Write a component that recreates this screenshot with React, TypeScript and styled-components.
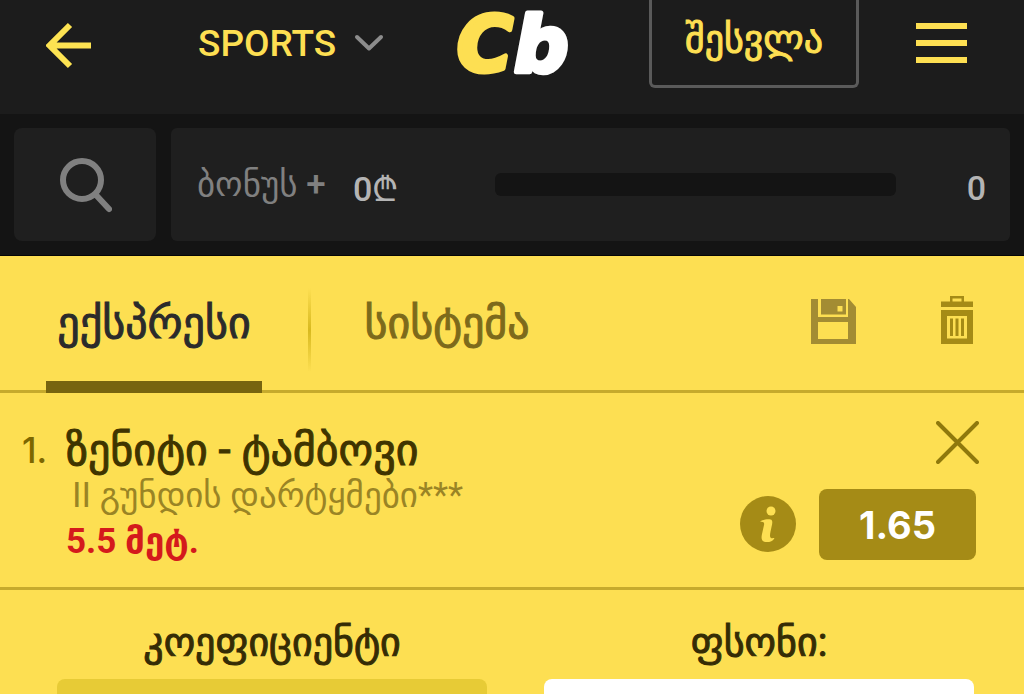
import React from "react";
import styled, { createGlobalStyle } from "styled-components";

const GlobalStyle = createGlobalStyle`
  *, *::before, *::after { box-sizing: border-box; }
  body { margin: 0; background: #fddf52; font-family: Roboto, "DejaVu Sans", sans-serif; }
  button, input { font: inherit; color: inherit; margin: 0; }
  button { background: none; border: 0; padding: 0; cursor: pointer; }
  svg { display: block; }
`;

const Page = styled.div`
  display: flex;
  flex-direction: column;
  height: 100vh;
  overflow: hidden;
  > * { flex-shrink: 0; }
`;

const Header = styled.header`
  display: flex;
  align-items: flex-start;
  justify-content: space-between;
  min-height: 114px;
  padding: 0 57px 0 46px;
  background: #1c1c1c;
  color: #fddf52;
`;

const HeaderGroup = styled.div<{ $gap: number }>`
  display: flex;
  align-items: flex-start;
  gap: ${(p) => p.$gap}px;
`;

const IconButton = styled.button`
  padding-top: 22px;
`;

const SportsMenu = styled.button`
  display: flex;
  align-items: center;
  gap: 18px;
  height: 86px;
  font-size: 37px;
  font-weight: 500;
`;

const Logo = styled.a`
  svg { overflow: visible; }
`;

const LoginButton = styled.button`
  width: 210px;
  height: 88px;
  padding-bottom: 8px;
  border: 3px solid #5a5a5a;
  border-top: 0;
  border-radius: 0 0 6px 6px;
  font-size: 38px;
  -webkit-text-stroke: 1px currentColor;
`;

const BonusBar = styled.section`
  display: flex;
  gap: 15px;
  padding: 14px;
  background: #141414;
  border-bottom: 1px solid #060606;
`;

const SearchButton = styled.button`
  display: flex;
  align-items: center;
  justify-content: center;
  width: 142px;
  height: 113px;
  border-radius: 8px;
  background: #1f1f1f;
`;

const BonusPanel = styled.div`
  display: flex;
  flex: 1;
  align-items: center;
  padding: 0 24px 0 26px;
  border-radius: 6px;
  background: #1f1f1f;
  color: #b4b4b4;
  font-size: 34px;
  font-weight: 500;
`;

const BonusLabel = styled.span`
  width: 156px;
  color: #808080;
  font-size: 35px;
  white-space: nowrap;
`;

const BonusAmount = styled.span`
  width: 142px;
  padding-top: 6px;
`;

const BonusPoints = styled.span`
  padding-top: 6px;
`;

const BonusTrack = styled.div`
  flex: 1;
  height: 23px;
  margin-right: 71px;
  border-radius: 6px;
  background: #141414;
`;

const TabBar = styled.nav`
  display: flex;
  align-items: center;
  height: 137px;
  padding: 0 51px 0 46px;
  border-bottom: 3px solid #c6aa2c;
`;

const Tab = styled.button<{ $active?: boolean }>`
  align-self: stretch;
  min-width: ${(p) => (p.$active ? 216 : 180)}px;
  margin-bottom: -3px;
  padding-top: 8px;
  border-bottom: 12px solid ${(p) => (p.$active ? "#77640f" : "transparent")};
  color: ${(p) => (p.$active ? "#2b2b2b" : "#7d6a1b")};
  font-size: 44px;
  -webkit-text-stroke: 1px currentColor;
`;

const TabDivider = styled.span`
  width: 3px;
  height: 84px;
  margin: 14px 46px 0;
  background: linear-gradient(#fddf52, #d8b91f, #fddf52);
`;

const TabActions = styled.div`
  display: flex;
  align-items: flex-end;
  gap: 85px;
  margin: 0 0 6px auto;
`;

const Selection = styled.article`
  display: flex;
  padding: 28px 48px 22px 22px;
  border-bottom: 3px solid #c6aa2c;
  line-height: 46px;
`;

const Ordinal = styled.span`
  width: 44px;
  padding-top: 6px;
  color: #7d6700;
  font-family: Inter, Roboto, sans-serif;
  font-size: 35px;
  font-weight: 500;
`;

const Details = styled.div`
  flex: 1;
  padding-top: 6px;
`;

const MatchTitle = styled.h2`
  margin: 0;
  color: #3f3400;
  font-size: 44px;
  font-weight: 400;
  -webkit-text-stroke: 1px currentColor;
`;

const Market = styled.p`
  margin: 0;
  padding-left: 6px;
  color: #9a8425;
  font-size: 35px;
`;

const Pick = styled.p`
  margin: 0;
  color: #d41a1c;
  font-size: 35px;
  font-weight: 700;
`;

const Side = styled.div`
  display: flex;
  flex-direction: column;
  align-items: flex-end;
  gap: 25px;
`;

const CloseButton = styled.button`
  margin-right: -3px;
`;

const OddsRow = styled.div`
  display: flex;
  align-items: center;
  gap: 22px;
`;

const Odds = styled.button`
  width: 157px;
  height: 71px;
  border-radius: 8px;
  background: #a58b16;
  color: #fff;
  font-family: Inter, Roboto, sans-serif;
  font-size: 38px;
  font-weight: 700;
`;

const Stake = styled.form`
  display: grid;
  grid-template-columns: 1fr 1fr;
  column-gap: 57px;
  padding: 30px 50px 0 57px;
`;

const Field = styled.label`
  display: flex;
  flex-direction: column;
  gap: 13px;
  color: #352c05;
  font-size: 40px;
  line-height: 46px;
  text-align: center;
  -webkit-text-stroke: 1px currentColor;
`;

const FieldInput = styled.input<{ $filled?: boolean }>`
  width: 100%;
  height: 76px;
  border: 0;
  border-radius: 8px;
  background: ${(p) => (p.$filled ? "#e7cb36" : "#fff")};
  text-align: center;
`;

export default function App() {
  return (
    <Page>
      <GlobalStyle />
      <Header>
        <HeaderGroup $gap={106}>
          <IconButton aria-label="Back">
            <svg width="46" height="47" viewBox="0 0 46 47" fill="none" stroke="#fde352" strokeWidth="6">
              <path d="M24 3 3.500 23.500 24 44M4 23.500H45" />
            </svg>
          </IconButton>
          <SportsMenu aria-haspopup="menu">
            SPORTS
            <svg width="30" height="18" viewBox="0 0 30 18" fill="none" stroke="#8c8c8c" strokeWidth="4" strokeLinecap="round" strokeLinejoin="round">
              <path d="M3 3 15 14.500 27 3" />
            </svg>
          </SportsMenu>
        </HeaderGroup>
        <Logo href="#" aria-label="Home">
          <svg width="118" height="96" viewBox="0 0 118 96" fontFamily="DejaVu Sans, sans-serif" fontWeight="700" fontStyle="italic" fontSize="76" strokeWidth="5" strokeLinejoin="round">
            <text x="-1" y="71" fill="#fddf52" stroke="#fddf52">C</text>
            <text x="56" y="71" fill="#fff" stroke="#fff">b</text>
          </svg>
        </Logo>
        <HeaderGroup $gap={57}>
          <LoginButton>შესვლა</LoginButton>
          <IconButton aria-label="Menu">
            <svg width="51" height="42" viewBox="0 0 51 42" fill="#fddf52">
              <path d="M0 1h51v6H0zM0 18h51v6H0zM0 35h51v6H0z" />
            </svg>
          </IconButton>
        </HeaderGroup>
      </Header>

      <BonusBar>
        <SearchButton aria-label="Search">
          <svg width="54" height="56" viewBox="0 0 54 56" fill="none" stroke="#808080" strokeLinecap="round">
            <circle cx="24" cy="23" r="19" strokeWidth="6" />
            <path d="M38 38 51 52" strokeWidth="6" />
          </svg>
        </SearchButton>
        <BonusPanel>
          <BonusLabel>ბონუს +</BonusLabel>
          <BonusAmount>0₾</BonusAmount>
          <BonusTrack />
          <BonusPoints>0</BonusPoints>
        </BonusPanel>
      </BonusBar>

      <TabBar>
        <Tab $active>ექსპრესი</Tab>
        <TabDivider />
        <Tab>სისტემა</Tab>
        <TabActions>
          <button aria-label="Save">
            <svg width="45" height="45" viewBox="0 0 45 45" fill="#a38c33">
              <path fillRule="evenodd" d="M0 0h7v40.500h30V0h1l7 8v37H0z" />
              <path d="M7 18h30v5H7zM7 40h30v5H7z" />
              <path fillRule="evenodd" d="M10 0h25v15.500H10zM26.500 7v5.500h5V7z" />
            </svg>
          </button>
          <button aria-label="Delete all">
            <svg width="32" height="48" viewBox="0 0 32 48" fill="#a58b16">
              <path fillRule="evenodd" d="M0 5.500h9V0h14v5.500h9V11H0zM11.500 2.500v3h9v-3zM0 14h32v34H0zM6 20v22.500h20V20z" />
              <path d="M9 22.500h3v17.500H9zM14.500 22.500h3v17.500h-3zM20 22.500h3v17.500h-3z" />
            </svg>
          </button>
        </TabActions>
      </TabBar>

      <Selection>
        <Ordinal>1.</Ordinal>
        <Details>
          <MatchTitle>ზენიტი - ტამბოვი</MatchTitle>
          <Market>II გუნდის დარტყმები***</Market>
          <Pick>5.5 მეტ.</Pick>
        </Details>
        <Side>
          <CloseButton aria-label="Remove">
            <svg width="43" height="43" viewBox="0 0 43 43" stroke="#8f790c" strokeWidth="4" strokeLinecap="round">
              <path d="M2 2 41 41M41 2 2 41" />
            </svg>
          </CloseButton>
          <OddsRow>
            <button aria-label="Info">
              <svg width="58" height="58" viewBox="0 0 58 58">
                <circle cx="29" cy="28" r="28" fill="#a58b16" />
                <circle cx="32" cy="15" r="4.500" fill="#fddf52" />
                <path d="M21 25.500C24 23.500 29 23 31.500 23.500C34 24 33.500 27 32.500 31C31.500 36 30 41 32 42C33 42.500 34.500 42 35.500 42C34 45.500 29.500 46.500 26.500 46C22.500 45.500 22 42 23 38L25 29C25.500 27 25 26 21 25.500Z" fill="#fddf52" />
              </svg>
            </button>
            <Odds>1.65</Odds>
          </OddsRow>
        </Side>
      </Selection>

      <Stake>
        <Field>
          კოეფიციენტი
          <FieldInput $filled readOnly />
        </Field>
        <Field>
          ფსონი:
          <FieldInput inputMode="decimal" />
        </Field>
      </Stake>
    </Page>
  );
}
